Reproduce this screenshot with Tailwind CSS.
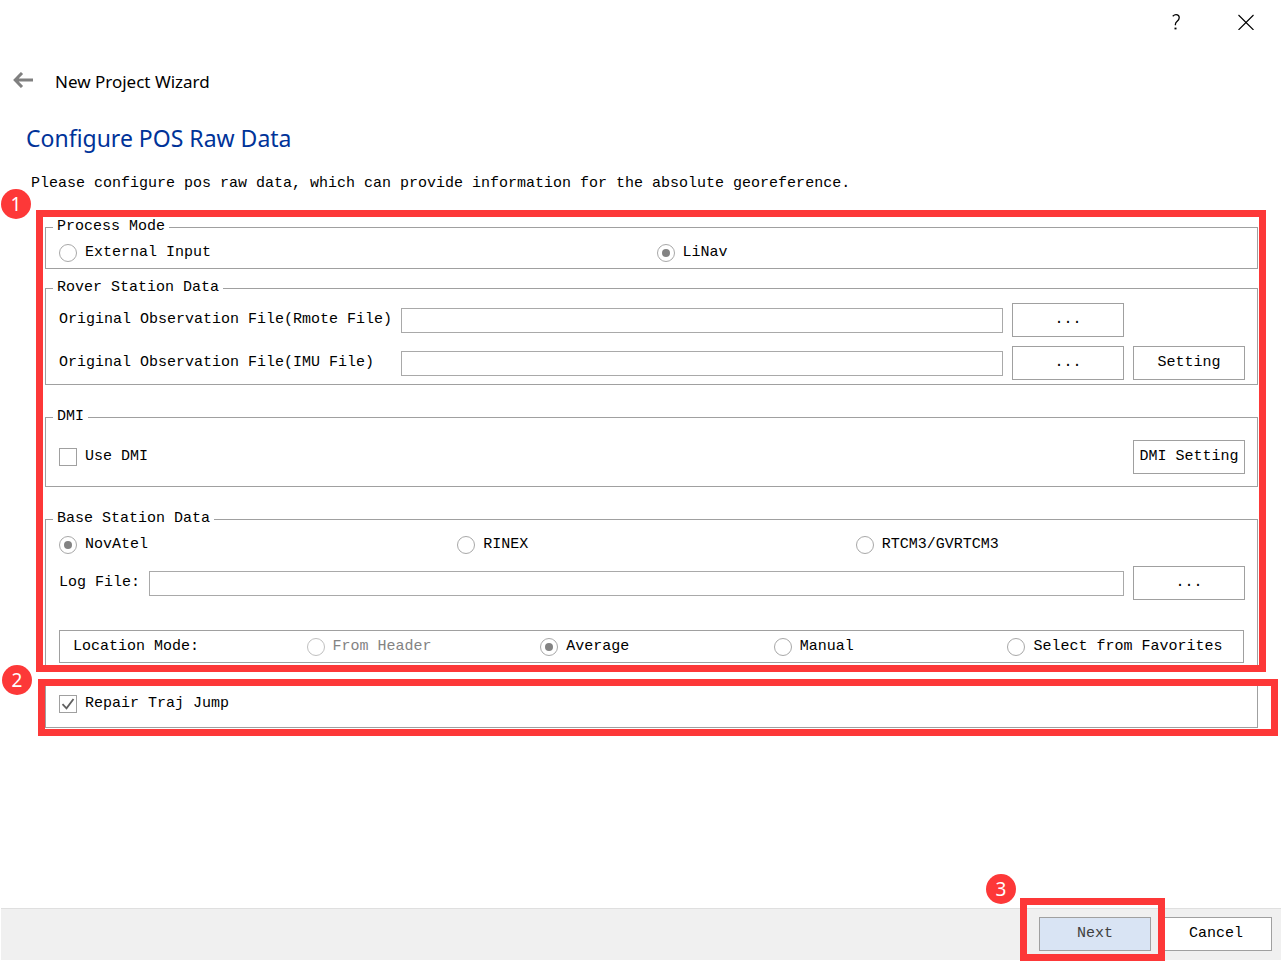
<!DOCTYPE html>
<html lang="en">
<head>
<meta charset="utf-8">
<title>New Project Wizard</title>
<script src="https://cdn.jsdelivr.net/npm/@tailwindcss/browser@4"></script>
</head>
<body class="flex min-h-screen flex-col bg-white px-px pb-px font-['Liberation_Mono',monospace] text-[15px] leading-[18px] text-black">

<header class="font-['Noto_Sans','Open_Sans',sans-serif]">
  <div class="flex h-11 items-center justify-end">
    <button type="button" aria-label="Help" class="flex h-11 w-[70px] items-center justify-center">
      <svg class="h-4 w-2" viewBox="0 0 8 16" fill="none" stroke="#000" stroke-width="1.3"><path d="M.7 2.2C2.2.9 3.2.7 4 .7c2 0 3.200 1.100 3.200 3 0 1.800-1 2.700-2 3.600-1 .9-1.800 1.700-1.800 3v1"/><path d="M2.500 14.500h2" stroke-width="1.800"/></svg>
    </button>
    <button type="button" aria-label="Close" class="flex h-11 w-[70px] items-center justify-center">
      <svg class="size-4" viewBox="0 0 16 16" fill="none" stroke="#000" stroke-width="1.1"><path d="M.5 1l15 15M15.500 1l-15 15"/></svg>
    </button>
  </div>
  <div class="flex items-center pt-4 pl-3">
    <button type="button" aria-label="Back" class="flex h-10 items-center pb-1">
      <svg class="h-4 w-5" viewBox="0 0 20 16" fill="none" stroke="#808080" stroke-width="3"><path d="M9 1L2.200 8 9 15M2 8h18"/></svg>
    </button>
    <span class="pl-[22px] text-[17px] leading-11">New Project Wizard</span>
  </div>
</header>

<main class="flex-1 pr-[23px] pl-11 pb-6">
  <h1 class="-ml-[19px] pt-4 font-['Noto_Sans','Open_Sans',sans-serif] text-[23px] leading-9 text-[#003399]">Configure POS Raw Data</h1>
  <p class="-ml-3.5 mt-4 leading-6">Please configure pos raw data, which can provide information for the absolute georeference.</p>

  <section class="relative mt-[22px]">
    <fieldset class="border border-[#a0a0a0] px-[7px]">
      <legend class="px-1">Process Mode</legend>
      <div class="grid grid-cols-2 gap-[9px] pt-2 pr-[5px] pb-1.5 pl-1.5">
        <label class="flex items-center gap-2"><input type="radio" name="mode" class="grid size-[18px] shrink-0 appearance-none place-content-center rounded-full border border-[#a8a8a8] checked:before:block checked:before:size-2 checked:before:rounded-full checked:before:bg-[#838383] checked:before:content-['']">External Input</label>
        <label class="flex items-center gap-2"><input type="radio" name="mode" checked class="grid size-[18px] shrink-0 appearance-none place-content-center rounded-full border border-[#a8a8a8] checked:before:block checked:before:size-2 checked:before:rounded-full checked:before:bg-[#838383] checked:before:content-['']">LiNav</label>
      </div>
    </fieldset>

    <fieldset class="mt-2.5 border border-[#a0a0a0] px-[7px]">
      <legend class="px-1">Rover Station Data</legend>
      <div class="grid grid-cols-[333px_1fr_112px_112px] items-center gap-[9px] pt-1.5 pr-[5px] pb-1 pl-1.5 whitespace-nowrap">
        <label for="remote">Original Observation File(Rmote File)</label>
        <input id="remote" type="text" class="h-[25px] w-full min-w-0 border border-[#a9a9a9] px-1">
        <button type="button" aria-label="Browse remote file" class="h-[34px] border border-[#a0a0a0]">...</button>
        <span></span>
        <label for="imu">Original Observation File(IMU File)</label>
        <input id="imu" type="text" class="h-[25px] w-full min-w-0 border border-[#a9a9a9] px-1">
        <button type="button" aria-label="Browse IMU file" class="h-[34px] border border-[#a0a0a0]">...</button>
        <button type="button" class="h-[34px] border border-[#a0a0a0]">Setting</button>
      </div>
    </fieldset>

    <fieldset class="mt-[23px] border border-[#a0a0a0] px-[7px]">
      <legend class="px-1">DMI</legend>
      <div class="flex items-center justify-between pt-3.5 pr-[5px] pb-3 pl-1.5">
        <label class="flex items-center gap-2"><input type="checkbox" class="size-[18px] shrink-0 appearance-none border border-[#a0a0a0]">Use DMI</label>
        <button type="button" class="h-[34px] w-28 border border-[#a0a0a0]">DMI Setting</button>
      </div>
    </fieldset>

    <fieldset class="mt-[23px] border border-[#a0a0a0] px-[7px]">
      <legend class="px-1">Base Station Data</legend>
      <div class="pt-2 pr-[5px] pb-1 pl-1.5">
        <div class="grid grid-cols-3 gap-[9px]">
          <label class="flex items-center gap-2"><input type="radio" name="base" checked class="grid size-[18px] shrink-0 appearance-none place-content-center rounded-full border border-[#a8a8a8] checked:before:block checked:before:size-2 checked:before:rounded-full checked:before:bg-[#838383] checked:before:content-['']">NovAtel</label>
          <label class="flex items-center gap-2"><input type="radio" name="base" class="grid size-[18px] shrink-0 appearance-none place-content-center rounded-full border border-[#a8a8a8] checked:before:block checked:before:size-2 checked:before:rounded-full checked:before:bg-[#838383] checked:before:content-['']">RINEX</label>
          <label class="flex items-center gap-2"><input type="radio" name="base" class="grid size-[18px] shrink-0 appearance-none place-content-center rounded-full border border-[#a8a8a8] checked:before:block checked:before:size-2 checked:before:rounded-full checked:before:bg-[#838383] checked:before:content-['']">RTCM3/GVRTCM3</label>
        </div>
        <div class="mt-3 flex items-center gap-[9px]">
          <label for="log">Log File:</label>
          <input id="log" type="text" class="h-[25px] min-w-0 flex-1 border border-[#a9a9a9] px-1">
          <button type="button" aria-label="Browse log file" class="h-[34px] w-28 border border-[#a0a0a0]">...</button>
        </div>
        <div role="radiogroup" aria-label="Location Mode" class="mt-[30px] mr-px grid h-[33px] grid-cols-5 items-center gap-[9px] border border-[#a0a0a0] pr-[11px] pl-[13px] whitespace-nowrap">
          <span>Location Mode:</span>
          <label class="flex items-center gap-2 text-[#838383]"><input type="radio" name="location" disabled class="size-[18px] shrink-0 appearance-none rounded-full border border-[#c0c0c0]">From Header</label>
          <label class="flex items-center gap-2"><input type="radio" name="location" checked class="grid size-[18px] shrink-0 appearance-none place-content-center rounded-full border border-[#a8a8a8] checked:before:block checked:before:size-2 checked:before:rounded-full checked:before:bg-[#838383] checked:before:content-['']">Average</label>
          <label class="flex items-center gap-2"><input type="radio" name="location" class="grid size-[18px] shrink-0 appearance-none place-content-center rounded-full border border-[#a8a8a8] checked:before:block checked:before:size-2 checked:before:rounded-full checked:before:bg-[#838383] checked:before:content-['']">Manual</label>
          <label class="flex items-center gap-2"><input type="radio" name="location" class="grid size-[18px] shrink-0 appearance-none place-content-center rounded-full border border-[#a8a8a8] checked:before:block checked:before:size-2 checked:before:rounded-full checked:before:bg-[#838383] checked:before:content-['']">Select from Favorites</label>
        </div>
      </div>
    </fieldset>

    <div class="pointer-events-none absolute -top-2 -right-2 -bottom-1 -left-[9px] border-[7px] border-[#fd3838]"></div>
    <span class="absolute -top-[29px] -left-11 flex size-[30px] items-center justify-center rounded-full bg-[#fd3838] font-['Noto_Sans',sans-serif] text-[19px] text-white">1</span>
  </section>

  <section class="relative mt-3 border border-[#a0a0a0] px-[13px] py-3.5">
    <label class="flex items-center gap-2">
      <span class="grid">
        <input type="checkbox" checked class="peer size-[18px] appearance-none border border-[#a0a0a0] [grid-area:1/1]">
        <svg class="pointer-events-none invisible size-[18px] peer-checked:visible [grid-area:1/1]" viewBox="0 0 18 18" fill="none" stroke="#606060" stroke-width="1.8"><path d="M3.500 9.200L7.500 13.300 14.500 4"/></svg>
      </span>
      Repair Traj Jump
    </label>
    <div class="pointer-events-none absolute -top-0.5 -right-[21px] -bottom-[9px] -left-2 border-[7px] border-[#fd3838]"></div>
    <span class="absolute -top-4 -left-11 flex size-[30px] items-center justify-center rounded-full bg-[#fd3838] font-['Noto_Sans',sans-serif] text-[19px] text-white">2</span>
  </section>
</main>

<footer class="flex justify-end gap-[9px] border-t border-[#dfdfdf] bg-[#f0f0f0] pt-2 pr-[9px] pb-[9px]">
  <div class="relative">
    <button type="button" class="h-[34px] w-28 border border-[#a0a0a0] bg-[#d9e4f4] text-[#404040]">Next</button>
    <div class="pointer-events-none absolute -top-[19px] -right-3.5 -bottom-2.5 -left-[19px] z-10 border-[7px] border-[#fd3838]"></div>
    <span class="absolute -top-[43px] -left-[53px] flex size-[30px] items-center justify-center rounded-full bg-[#fd3838] font-['Noto_Sans',sans-serif] text-[19px] text-white">3</span>
  </div>
  <button type="button" class="h-[34px] w-28 border border-[#a0a0a0] bg-white">Cancel</button>
</footer>
</body>
</html>
